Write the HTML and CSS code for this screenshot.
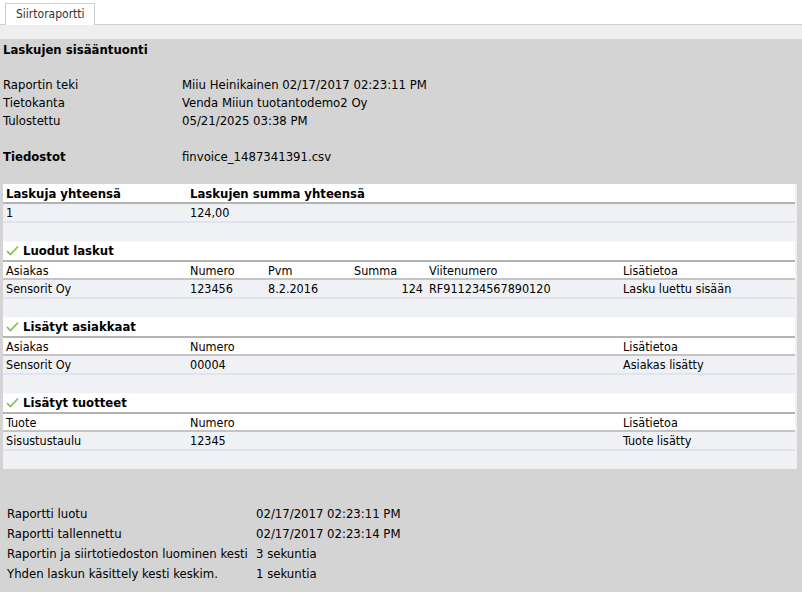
FILE: index.html
```html
<!DOCTYPE html>
<html lang="fi">

<head>
    <meta charset="UTF-8">
    <title>Siirtoraportti</title>
    <link rel="stylesheet" href="styles.css">
</head>

<body>
    <div class="tabbar">
        <div class="tab">Siirtoraportti</div>
    </div>
    <div class="strip"></div>

    <main class="report">
        <h1>Laskujen sisääntuonti</h1>

        <div class="info">
            <span>Raportin teki</span><span>Miiu Heinikainen 02/17/2017 02:23:11 PM</span>
            <span>Tietokanta</span><span>Venda Miiun tuotantodemo2 Oy</span>
            <span>Tulostettu</span><span>05/21/2025 03:38 PM</span>
            <span class="gap"></span><span class="gap"></span>
            <b>Tiedostot</b><span>finvoice_1487341391.csv</span>
        </div>

        <div class="panel">
            <table>
                <colgroup>
                    <col class="c1"><col class="c2"><col class="c3"><col class="c4"><col class="c5"><col class="c6">
                </colgroup>
                <tr class="head">
                    <th>Laskuja yhteensä</th>
                    <th colspan="5">Laskujen summa yhteensä</th>
                </tr>
                <tr class="row">
                    <td>1</td>
                    <td colspan="5">124,00</td>
                </tr>
                <tr class="empty"><td colspan="6"></td></tr>

                <tr class="head">
                    <th colspan="6"><span class="check"><svg width="13" height="11" viewBox="0 0 13 11"><path d="M1 6 L4.5 9.5 L12 1.5" fill="none" stroke="#7cc04a" stroke-width="1.6"/></svg></span>Luodut laskut</th>
                </tr>
                <tr class="cols">
                    <td>Asiakas</td><td>Numero</td><td>Pvm</td><td>Summa</td><td>Viitenumero</td><td>Lisätietoa</td>
                </tr>
                <tr class="row">
                    <td>Sensorit Oy</td><td>123456</td><td>8.2.2016</td><td class="num">124</td><td>RF911234567890120</td><td>Lasku luettu sisään</td>
                </tr>
                <tr class="empty"><td colspan="6"></td></tr>

                <tr class="head">
                    <th colspan="6"><span class="check"><svg width="13" height="11" viewBox="0 0 13 11"><path d="M1 6 L4.5 9.5 L12 1.5" fill="none" stroke="#7cc04a" stroke-width="1.6"/></svg></span>Lisätyt asiakkaat</th>
                </tr>
                <tr class="cols">
                    <td>Asiakas</td><td colspan="4">Numero</td><td>Lisätietoa</td>
                </tr>
                <tr class="row">
                    <td>Sensorit Oy</td><td colspan="4">00004</td><td>Asiakas lisätty</td>
                </tr>
                <tr class="empty"><td colspan="6"></td></tr>

                <tr class="head">
                    <th colspan="6"><span class="check"><svg width="13" height="11" viewBox="0 0 13 11"><path d="M1 6 L4.5 9.5 L12 1.5" fill="none" stroke="#7cc04a" stroke-width="1.6"/></svg></span>Lisätyt tuotteet</th>
                </tr>
                <tr class="cols">
                    <td>Tuote</td><td colspan="4">Numero</td><td>Lisätietoa</td>
                </tr>
                <tr class="row">
                    <td>Sisustustaulu</td><td colspan="4">12345</td><td>Tuote lisätty</td>
                </tr>
                <tr class="empty last"><td colspan="6"></td></tr>
            </table>
        </div>

        <div class="timing">
            <span>Raportti luotu</span><span>02/17/2017 02:23:11 PM</span>
            <span>Raportti tallennettu</span><span>02/17/2017 02:23:14 PM</span>
            <span>Raportin ja siirtotiedoston luominen kesti</span><span>3 sekuntia</span>
            <span>Yhden laskun käsittely kesti keskim.</span><span>1 sekuntia</span>
        </div>
    </main>
</body>

</html>
```

FILE: styles.css
```css
body {
    margin: 0;
    font-family: "DejaVu Sans Condensed", "DejaVu Sans", sans-serif;
    font-size: 13px;
    color: #000;
    background-color: #d4d4d4;
}

.tabbar {
    height: 24px;
    background-color: #fff;
    border-bottom: 1px solid #d0d0d0;
    padding-left: 5px;
    display: flex;
    align-items: flex-end;
}

.tab {
    height: 21px;
    padding: 0 9px 0 10px;
    border: 1px solid #cfcfcf;
    border-bottom: none;
    background-color: #fff;
    font-size: 12px;
    line-height: 21px;
    color: #333;
    margin-bottom: -1px;
}

.strip {
    height: 14px;
    background-color: #efefef;
}

.report {
    padding: 2px 0 0 0;
}

h1 {
    font-size: 13px;
    font-weight: bold;
    margin: 0 0 0 3px;
    line-height: 18px;
}

.info {
    display: grid;
    grid-template-columns: 179px auto;
    line-height: 18px;
    margin: 17px 0 0 3px;
}

.gap {
    height: 18px;
}

.panel {
    margin: 18px 5px 0 3px;
    background-color: #fff;
    border-right: 2px solid #f0f0f0;
}

table {
    width: 100%;
    border-collapse: collapse;
    table-layout: fixed;
}

.c1 { width: 184px; }
.c2 { width: 78px; }
.c3 { width: 86px; }
.c4 { width: 75px; }
.c5 { width: 194px; }

th,
td {
    text-align: left;
    padding: 0 3px;
    white-space: nowrap;
}

.head th {
    height: 18px;
    font-size: 13px;
    font-weight: bold;
    border-bottom: 2px solid #b4b4b4;
    background-color: #fff;
}

.cols td {
    height: 16px;
    font-size: 12.5px;
    border-bottom: 2px solid #c4c4c4;
    background-color: #fff;
}

.row td {
    height: 17px;
    font-size: 12.5px;
    background-color: #f0f1f4;
    border-bottom: 2px solid #e3e3f0;
}

.empty td {
    height: 18px;
    background-color: #f0f1f4;
    border-bottom: 1px solid #fafafa;
}

.empty.last td {
    height: 18px;
    border-bottom: none;
}

.num {
    text-align: right;
}

.check {
    display: inline-block;
    width: 17px;
    vertical-align: -1px;
}

.timing {
    display: grid;
    grid-template-columns: 249px auto;
    line-height: 20px;
    margin: 35px 0 0 7px;
}
```
